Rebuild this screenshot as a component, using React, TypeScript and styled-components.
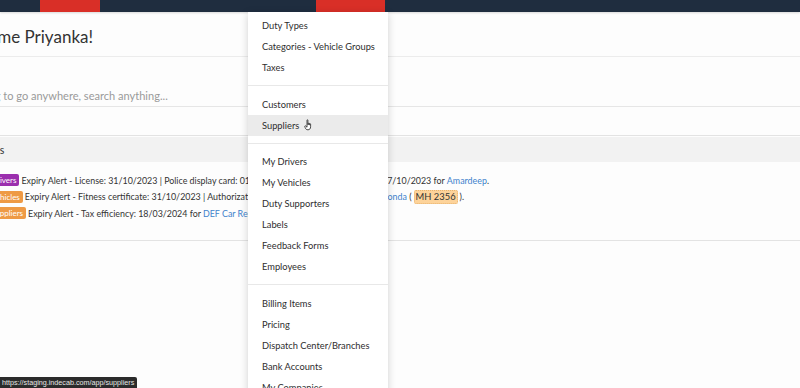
import React from 'react';
import styled, { createGlobalStyle } from 'styled-components';

const GlobalStyle = createGlobalStyle`
  html, body {
    margin: 0;
    padding: 0;
    background: #ffffff;
    overflow: hidden;
  }
  body {
    font-family: Lato, "Open Sans", "Liberation Sans", sans-serif;
    color: #333333;
  }
`

const Screen = styled.div`
  position: relative;
  width: 800px;
  height: 388px;
  overflow: hidden;
  background: #fdfdfd;
`

const TopBar = styled.div`
  display: flex;
  height: 12px;
  background: #1f2d3f;
  box-shadow: 0 1px 2px rgba(0, 0, 0, 0.15);
`

const NavTab = styled.div<{ $w: number; $active?: boolean }>`
  width: ${p => p.$w}px;
  flex-shrink: 0;
  background: ${p => (p.$active ? '#d92f27' : 'transparent')};
`

// page is scrolled sideways, so the left part of the content sits off screen
const Main = styled.div`
  margin-left: -80px;
  display: flex;
  flex-direction: column;
`

const Welcome = styled.div`
  height: 45px;
  display: flex;
  align-items: center;
  padding-left: 30px;
  padding-top: 5px;
  box-sizing: border-box;
  font-size: 17px;
  color: #333;
  border-bottom: 1px solid #ececec;
`

const SearchRow = styled.div`
  height: 50px;
  display: flex;
  align-items: flex-end;
  padding: 0 0 4px 24px;
  box-sizing: border-box;
  font-size: 11.05px;
  color: #9a9a9a;
  border-bottom: 1px solid #e6e6e6;
`

const Panel = styled.div`
  margin-top: 28px;
  border-top: 1px solid #e3e3e3;
  border-bottom: 1px solid #e3e3e3;
  padding-bottom: 20px;
`

const PanelHeader = styled.div`
  height: 25px;
  margin-top: 1px;
  background: #f2f2f2;
  display: flex;
  align-items: center;
  padding-left: 57px;
  font-size: 10.5px;
  color: #333;
`

const AlertList = styled.div`
  padding: 12px 0 0 68px;
  display: flex;
  flex-direction: column;
  gap: 4px;
`

const AlertRow = styled.div`
  display: flex;
  align-items: center;
  height: 12.5px;
  font-size: 8.9px;
  white-space: nowrap;
  color: #333;
`

const Badge = styled.span<{ $color: string }>`
  display: inline-block;
  background: ${p => p.$color};
  color: #fff;
  font-size: 8px;
  line-height: 12px;
  padding: 0 3px;
  border-radius: 2px;
  margin-right: 2px;
`

const Link = styled.span`
  color: #3d82cc;
`

const Plate = styled.span`
  background: #fdd39a;
  border: 1px dotted #e8b470;
  border-radius: 2px;
  padding: 0 1px;
  margin: 0 2px;
  font-size: 9.4px;
  line-height: 12px;
`

const Menu = styled.div`
  position: absolute;
  left: 248px;
  top: 12px;
  width: 140px;
  height: 400px;
  background: #fff;
  box-shadow: 0 2px 8px rgba(0, 0, 0, 0.18);
  padding-top: 3px;
  box-sizing: border-box;
`

const MenuItem = styled.div<{ $hover?: boolean }>`
  height: 21px;
  line-height: 21px;
  padding-left: 14px;
  font-size: 9.3px;
  color: #2e2e2e;
  white-space: nowrap;
  background: ${p => (p.$hover ? '#ebebeb' : 'transparent')};
  display: flex;
  align-items: center;
  gap: 5px;
`

const MenuDivider = styled.div`
  height: 1px;
  background: #e8e8e8;
  margin: 7px 0 7.5px;
`

const StatusBar = styled.div`
  position: absolute;
  left: 0;
  bottom: 0;
  height: 11px;
  padding: 0 3px 0 2px;
  background: #2b2b2b;
  color: #e6e6e6;
  font-family: "Liberation Sans", Arial, sans-serif;
  font-size: 7.2px;
  line-height: 11px;
  border-top-right-radius: 2px;
`

const HandCursor = () => (
  <svg width="10" height="12" viewBox="0 0 10 12" style={{ display: 'block' }}>
    <path
      d="M3 1.2c0-.6.9-.6.9 0V6 M3.9 4.6c0-.6.9-.6.9 0V6 M4.8 4.9c0-.6.9-.6.9 0V6.2 M5.7 5.2c0-.6.9-.6.9 0v2.6c0 1.8-1 3-2.6 3S1.7 10 1.2 8.8L.8 7.4c-.2-.6.6-.9.9-.4L3 8.2V1.2"
      fill="#fff"
      stroke="#222"
      strokeWidth="0.8"
      strokeLinejoin="round"
    />
  </svg>
)

const menuGroups: string[][] = [
  ['Duty Types', 'Categories - Vehicle Groups', 'Taxes'],
  ['Customers', 'Suppliers'],
  ['My Drivers', 'My Vehicles', 'Duty Supporters', 'Labels', 'Feedback Forms', 'Employees'],
  ['Billing Items', 'Pricing', 'Dispatch Center/Branches', 'Bank Accounts', 'My Companies'],
]

const App = () => {
  return (
    <Screen>
      <GlobalStyle />
      <TopBar>
        <NavTab $w={40} />
        <NavTab $w={60} $active />
        <NavTab $w={216} />
        <NavTab $w={69} $active />
      </TopBar>
      <Main>
        <Welcome>Welcome Priyanka!</Welcome>
        <SearchRow>Start typing to go anywhere, search anything...</SearchRow>
        <Panel>
          <PanelHeader>Alerts</PanelHeader>
          <AlertList>
            <AlertRow>
              <Badge $color="#9b2fae">Drivers</Badge>
              Expiry Alert - License: 31/10/2023 | Police display card: 01/10/2023 | Medical Certificate(s): 07/10/2023 for&nbsp;
              <Link>Amardeep</Link>.
            </AlertRow>
            <AlertRow>
              <Badge $color="#ee9a45">Vehicles</Badge>
              Expiry Alert - Fitness certificate: 31/10/2023 | Authorization Certificate(s): 31/10/2023 for&nbsp;
              <Link>Honda</Link>&nbsp;(<Plate>MH 2356</Plate>).
            </AlertRow>
            <AlertRow>
              <Badge $color="#ee9a45">Suppliers</Badge>
              Expiry Alert - Tax efficiency: 18/03/2024 for&nbsp;<Link>DEF Car Rentals</Link>.
            </AlertRow>
          </AlertList>
        </Panel>
      </Main>
      <Menu>
        {menuGroups.map((group, gi) => (
          <React.Fragment key={gi}>
            {gi > 0 && <MenuDivider />}
            {group.map(item => (
              <MenuItem key={item} $hover={item === 'Suppliers'}>
                {item}
                {item === 'Suppliers' && <HandCursor />}
              </MenuItem>
            ))}
          </React.Fragment>
        ))}
      </Menu>
      <StatusBar>https://staging.indecab.com/app/suppliers</StatusBar>
    </Screen>
  )
}

export default App;
